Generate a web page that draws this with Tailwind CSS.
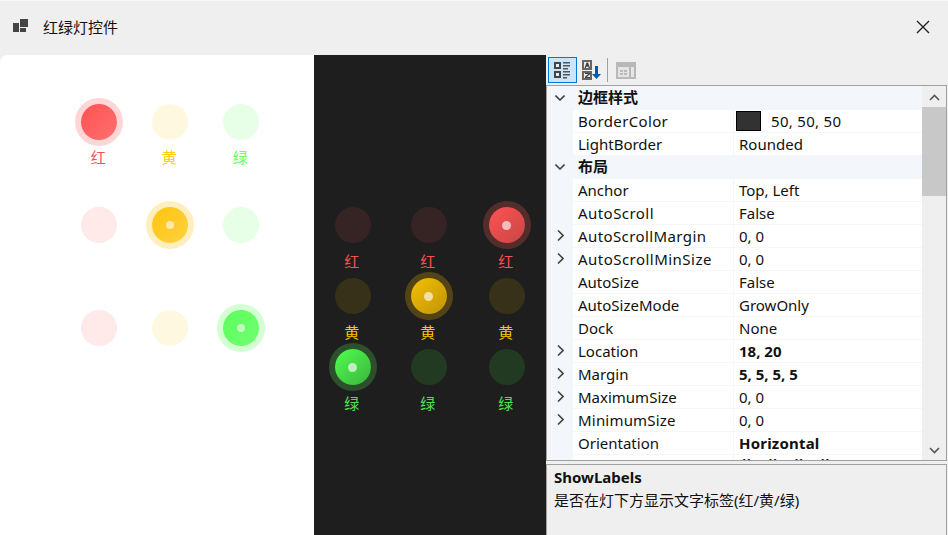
<!DOCTYPE html>
<html><head><meta charset="utf-8"><script src="https://cdn.jsdelivr.net/npm/@tailwindcss/browser@4"></script></head>
<body class="w-[948px] h-[535px] overflow-hidden bg-[#efefef] text-[15px] leading-[22px] text-[#111] font-['Noto_Sans','Noto_Sans_CJK_SC',sans-serif]">
<header class="h-[55px] flex items-center border-t border-white/60 pb-[2px]">
  <svg class="ml-[13px] w-[16px] h-[16px] mt-[-2px]" viewBox="0 0 16 16"><path fill="#444" d="M0 5h6v9H0zM7 1h8v8H7zM7 10h6v4H7z"/></svg>
  <span class="ml-[14px] text-[#111]">红绿灯控件</span>
  <svg class="ml-auto mr-[18px] w-[14px] h-[14px]" viewBox="0 0 14 14"><path stroke="#222" stroke-width="1.4" d="M1 1l12 12M13 1L1 13"/></svg>
</header>
<main class="flex h-[480px]">
  <section class="w-[314px] bg-white rounded-tl-[8px] pt-[48.500px] pl-[81.300px] flex flex-col">
    <div class="flex gap-[35px] h-[103px]">
      <div class="flex flex-col items-center w-[36px]"><div class="w-9 h-9 shrink-0 rounded-full bg-linear-to-br from-[#ff5050] to-[#ff7070] shadow-[0_0_0_6px_#ffd6d6]"></div><span class="mt-[6px] pr-[2px] text-[#ff5050]">红</span></div>
      <div class="flex flex-col items-center w-[36px]"><div class="w-9 h-9 shrink-0 rounded-full bg-[#fff8e1]"></div><span class="mt-[6px] pr-[2px] text-[#ffc800]">黄</span></div>
      <div class="flex flex-col items-center w-[36px]"><div class="w-9 h-9 shrink-0 rounded-full bg-[#e6ffe6]"></div><span class="mt-[6px] pr-[2px] text-[#66ff66]">绿</span></div>
    </div>
    <div class="flex gap-[35px] h-[103px]">
      <div class="w-9 h-9 rounded-full bg-[#ffe9e9]"></div>
      <div class="w-9 h-9 rounded-full bg-linear-to-br from-[#ffc400] to-[#ffd23c] shadow-[0_0_0_6px_#ffefc0] flex items-center justify-center"><div class="w-2 h-2 rounded-full bg-[#ffe9a6]"></div></div>
      <div class="w-9 h-9 rounded-full bg-[#e6ffe6]"></div>
    </div>
    <div class="flex gap-[35px]">
      <div class="w-9 h-9 rounded-full bg-[#ffe9e9]"></div>
      <div class="w-9 h-9 rounded-full bg-[#fff8e1]"></div>
      <div class="w-9 h-9 rounded-full bg-linear-to-br from-[#5cff5c] to-[#70ff70] shadow-[0_0_0_6px_#d3ffd3] flex items-center justify-center"><div class="w-2 h-2 rounded-full bg-[#c0ffc0]"></div></div>
    </div>
  </section>
  <section class="w-[232px] bg-[#1e1e1e] pt-[152px] pl-[20.700px] grid grid-cols-[76px_78px_36px] grid-rows-[71px_71px_71px] justify-items-start content-start">
    <div class="flex flex-col items-center w-9"><div class="w-9 h-9 shrink-0 rounded-full bg-[#362323]"></div><span class="mt-[7px] pr-[2px] text-[#ff5050]">红</span></div>
    <div class="flex flex-col items-center w-9"><div class="w-9 h-9 shrink-0 rounded-full bg-[#362323]"></div><span class="mt-[7px] pr-[2px] text-[#ff5050]">红</span></div>
    <div class="flex flex-col items-center w-9"><div class="w-9 h-9 shrink-0 rounded-full bg-linear-to-br from-[#ff5252] to-[#c84646] shadow-[0_0_0_6px_#532c2c] flex items-center justify-center"><div class="w-[9px] h-[9px] rounded-full bg-[#f5bcbc]"></div></div><span class="mt-[7px] pr-[2px] text-[#ff5050]">红</span></div>
    <div class="flex flex-col items-center w-9"><div class="w-9 h-9 shrink-0 rounded-full bg-[#383119]"></div><span class="mt-[7px] pr-[2px] text-[#ffc800]">黄</span></div>
    <div class="flex flex-col items-center w-9"><div class="w-9 h-9 shrink-0 rounded-full bg-linear-to-br from-[#f5c000] to-[#c09408] shadow-[0_0_0_6px_#534418] flex items-center justify-center"><div class="w-[9px] h-[9px] rounded-full bg-[#f2e0a0]"></div></div><span class="mt-[7px] pr-[2px] text-[#ffc800]">黄</span></div>
    <div class="flex flex-col items-center w-9"><div class="w-9 h-9 shrink-0 rounded-full bg-[#383119]"></div><span class="mt-[7px] pr-[2px] text-[#ffc800]">黄</span></div>
    <div class="flex flex-col items-center w-9"><div class="w-9 h-9 shrink-0 rounded-full bg-linear-to-br from-[#50ff50] to-[#3cb43c] shadow-[0_0_0_6px_#2c4f2c] flex items-center justify-center"><div class="w-[9px] h-[9px] rounded-full bg-[#bcf0bc]"></div></div><span class="mt-[7px] pr-[2px] text-[#50e050]">绿</span></div>
    <div class="flex flex-col items-center w-9"><div class="w-9 h-9 shrink-0 rounded-full bg-[#223a22]"></div><span class="mt-[7px] pr-[2px] text-[#50e050]">绿</span></div>
    <div class="flex flex-col items-center w-9"><div class="w-9 h-9 shrink-0 rounded-full bg-[#223a22]"></div><span class="mt-[7px] pr-[2px] text-[#50e050]">绿</span></div>
  </section>
  <section class="w-[402px] flex flex-col">
    <div class="h-[30px] flex items-center pl-[2px] shrink-0">
      <div class="w-[29px] h-[26px] border border-[#0078d7] bg-[#cce4f7] flex items-center justify-center"><svg class="w-[19px] h-[20px]" viewBox="0 0 19 20"><path fill="#444" d="M1 2h7v7H1zM1 11h7v7H1z"/><path fill="#e8eef4" d="M3 4h3v3H3zM3 13h3v3H3z"/><path fill="#555" d="M10 2h7v1.500h-7zM10 5h7v1.500h-7zM10 8h5v1.500h-5zM10 11h7v1.500h-7zM10 14h7v1.500h-7zM10 17h4v1.500h-4z"/></svg></div>
      <div class="ml-[4px] w-[21px] h-[26px] flex items-center justify-center"><svg class="w-[21px] h-[21px]" viewBox="0 0 21 21"><path fill="#666" d="M1 0h10v10H1zM1 11h10v9H1z"/><path fill="#e8e8e8" d="M3 2h6v6H3zM3 13h6v5H3z"/><path fill="#444" d="M5.500 2.500h1.500L9 8H7.800l-.4-1.200H5.200L4.800 8H3.600zM4 13h5v1.200L5.800 17H9v1H4v-1.200L7.200 14H4z"/><path fill="#0059a8" d="M14 6h3v8h3l-4.500 5L11 14h3z"/></svg></div>
      <div class="w-px h-[24px] bg-[#a0a0a0] ml-[5px]"></div>
      <svg class="ml-[8px] w-[20px] h-[17px]" viewBox="0 0 20 17"><path fill="#b8b8b8" d="M0 0h20v17H0z"/><path fill="#e4e4e4" d="M2 5h11v10H2zM15 5h3v10h-3z"/><path fill="#b8b8b8" d="M4 8h3v2H4zM8 8h3v2H8zM4 11h3v2H4zM8 11h3v2H8z"/></svg>
    </div>
    <div class="h-[376px] shrink-0 mr-px border border-[#a0a0a0] flex overflow-hidden bg-[#f3f6fb]">
      <div class="w-[375px] shrink-0 flex flex-col">
        <div class="h-[23px] shrink-0 flex items-center font-bold"><svg class="mx-[8px] w-[10px] h-[6px]" viewBox="0 0 10 6"><path fill="none" stroke="#444" stroke-width="1.6" d="M.5.500l4.500 4.500 4.500-4.500"/></svg><span class="ml-[5px] mb-[2px]">边框样式</span></div>
        <div class="h-[23px] shrink-0 flex pl-[26px]"><div class="w-[161px] h-full bg-white border-t border-r border-[#f3f6fb] pl-[5px] flex items-center tracking-[0.35px]">BorderColor</div><div class="flex-1 h-full bg-white border-t border-[#f3f6fb] flex items-center pl-[2px]"><span class="w-[25px] h-[20px] bg-[#323232] border border-black"></span><span class="ml-[10px] tracking-[0.3px]">50, 50, 50</span></div></div>
        <div class="h-[23px] shrink-0 flex pl-[26px]"><div class="w-[161px] h-full bg-white border-t border-r border-[#f3f6fb] pl-[5px] flex items-center">LightBorder</div><div class="flex-1 h-full bg-white border-t border-[#f3f6fb] flex items-center pl-[5px]">Rounded</div></div>
        <div class="h-[23px] shrink-0 flex items-center font-bold border-t border-[#f3f6fb]"><svg class="mx-[8px] w-[10px] h-[6px]" viewBox="0 0 10 6"><path fill="none" stroke="#444" stroke-width="1.6" d="M.5.500l4.500 4.500 4.500-4.500"/></svg><span class="ml-[5px] mb-[2px]">布局</span></div>
        <div class="h-[23px] shrink-0 flex pl-[26px]"><div class="w-[161px] h-full bg-white border-t border-r border-[#f3f6fb] pl-[5px] flex items-center">Anchor</div><div class="flex-1 h-full bg-white border-t border-[#f3f6fb] flex items-center pl-[5px]">Top, Left</div></div>
        <div class="h-[23px] shrink-0 flex pl-[26px]"><div class="w-[161px] h-full bg-white border-t border-r border-[#f3f6fb] pl-[5px] flex items-center tracking-[0.45px]">AutoScroll</div><div class="flex-1 h-full bg-white border-t border-[#f3f6fb] flex items-center pl-[5px]">False</div></div>
        <div class="h-[23px] shrink-0 flex items-center relative pl-[26px]"><svg class="absolute left-[10px] w-[7px] h-[11px]" viewBox="0 0 7 11"><path fill="none" stroke="#444" stroke-width="1.6" d="M1 .500l5 5-5 5"/></svg><div class="w-[161px] h-full bg-white border-t border-r border-[#f3f6fb] pl-[5px] flex items-center tracking-[0.4px]">AutoScrollMargin</div><div class="flex-1 h-full bg-white border-t border-[#f3f6fb] flex items-center pl-[5px]">0, 0</div></div>
        <div class="h-[23px] shrink-0 flex items-center relative pl-[26px]"><svg class="absolute left-[10px] w-[7px] h-[11px]" viewBox="0 0 7 11"><path fill="none" stroke="#444" stroke-width="1.6" d="M1 .500l5 5-5 5"/></svg><div class="w-[161px] h-full bg-white border-t border-r border-[#f3f6fb] pl-[5px] flex items-center tracking-[0.47px]">AutoScrollMinSize</div><div class="flex-1 h-full bg-white border-t border-[#f3f6fb] flex items-center pl-[5px]">0, 0</div></div>
        <div class="h-[23px] shrink-0 flex pl-[26px]"><div class="w-[161px] h-full bg-white border-t border-r border-[#f3f6fb] pl-[5px] flex items-center">AutoSize</div><div class="flex-1 h-full bg-white border-t border-[#f3f6fb] flex items-center pl-[5px]">False</div></div>
        <div class="h-[23px] shrink-0 flex pl-[26px]"><div class="w-[161px] h-full bg-white border-t border-r border-[#f3f6fb] pl-[5px] flex items-center">AutoSizeMode</div><div class="flex-1 h-full bg-white border-t border-[#f3f6fb] flex items-center pl-[5px]">GrowOnly</div></div>
        <div class="h-[23px] shrink-0 flex pl-[26px]"><div class="w-[161px] h-full bg-white border-t border-r border-[#f3f6fb] pl-[5px] flex items-center">Dock</div><div class="flex-1 h-full bg-white border-t border-[#f3f6fb] flex items-center pl-[5px]">None</div></div>
        <div class="h-[23px] shrink-0 flex items-center relative pl-[26px]"><svg class="absolute left-[10px] w-[7px] h-[11px]" viewBox="0 0 7 11"><path fill="none" stroke="#444" stroke-width="1.6" d="M1 .500l5 5-5 5"/></svg><div class="w-[161px] h-full bg-white border-t border-r border-[#f3f6fb] pl-[5px] flex items-center">Location</div><div class="flex-1 h-full bg-white border-t border-[#f3f6fb] flex items-center pl-[5px] font-bold">18, 20</div></div>
        <div class="h-[23px] shrink-0 flex items-center relative pl-[26px]"><svg class="absolute left-[10px] w-[7px] h-[11px]" viewBox="0 0 7 11"><path fill="none" stroke="#444" stroke-width="1.6" d="M1 .500l5 5-5 5"/></svg><div class="w-[161px] h-full bg-white border-t border-r border-[#f3f6fb] pl-[5px] flex items-center">Margin</div><div class="flex-1 h-full bg-white border-t border-[#f3f6fb] flex items-center pl-[5px] font-bold">5, 5, 5, 5</div></div>
        <div class="h-[23px] shrink-0 flex items-center relative pl-[26px]"><svg class="absolute left-[10px] w-[7px] h-[11px]" viewBox="0 0 7 11"><path fill="none" stroke="#444" stroke-width="1.6" d="M1 .500l5 5-5 5"/></svg><div class="w-[161px] h-full bg-white border-t border-r border-[#f3f6fb] pl-[5px] flex items-center">MaximumSize</div><div class="flex-1 h-full bg-white border-t border-[#f3f6fb] flex items-center pl-[5px]">0, 0</div></div>
        <div class="h-[23px] shrink-0 flex items-center relative pl-[26px]"><svg class="absolute left-[10px] w-[7px] h-[11px]" viewBox="0 0 7 11"><path fill="none" stroke="#444" stroke-width="1.6" d="M1 .500l5 5-5 5"/></svg><div class="w-[161px] h-full bg-white border-t border-r border-[#f3f6fb] pl-[5px] flex items-center tracking-[0.2px]">MinimumSize</div><div class="flex-1 h-full bg-white border-t border-[#f3f6fb] flex items-center pl-[5px]">0, 0</div></div>
        <div class="h-[23px] shrink-0 flex pl-[26px]"><div class="w-[161px] h-full bg-white border-t border-r border-[#f3f6fb] pl-[5px] flex items-center">Orientation</div><div class="flex-1 h-full bg-white border-t border-[#f3f6fb] flex items-center pl-[5px] font-bold tracking-[0.2px]">Horizontal</div></div>
        <div class="h-[23px] shrink-0 flex pl-[26px]"><div class="w-[161px] h-full bg-white border-t border-r border-[#f3f6fb]"></div><div class="flex-1 h-full bg-white border-t border-[#f3f6fb] flex items-center pl-[5px] font-bold tracking-[1px]">黄, 黄, 黄, 黄</div></div>
      </div>
      <div class="flex-1 bg-[#efefef] flex flex-col items-center">
        <svg class="mt-[8px] w-[11px] h-[7px]" viewBox="0 0 11 7"><path fill="none" stroke="#555" stroke-width="1.6" d="M1 6l4.500-4.500L10 6"/></svg>
        <div class="w-full h-[89px] mt-[6px] bg-[#c8c8c8]"></div>
        <svg class="mt-auto mb-[6px] w-[11px] h-[7px]" viewBox="0 0 11 7"><path fill="none" stroke="#555" stroke-width="1.6" d="M1 1l4.500 4.500L10 1"/></svg>
      </div>
    </div>
    <div class="mt-[3px] mr-px flex-1 border border-b-0 border-[#a0a0a0] px-[7px] pt-[1px]">
      <div class="font-bold h-[23px]">ShowLabels</div>
      <div>是否在灯下方显示文字标签(红/黄/绿)</div>
    </div>
  </section>
</main>
</body></html>
